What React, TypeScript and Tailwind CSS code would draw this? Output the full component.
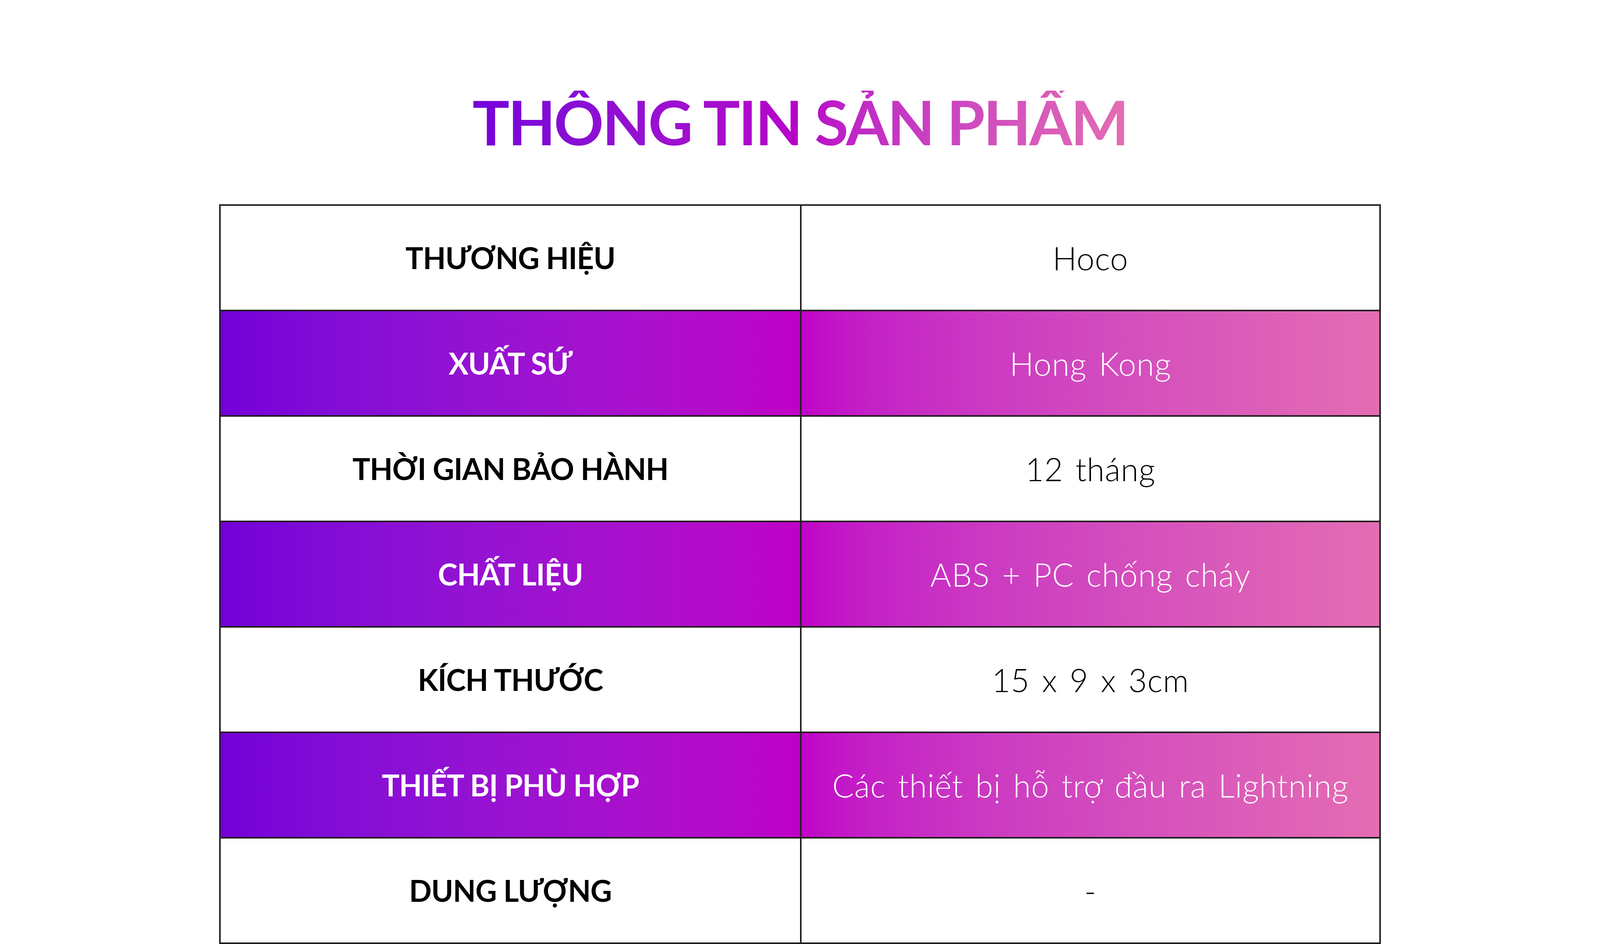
import React from "react";

const rows: { label: string; value: string; grad: boolean }[] = [
  { label: "THƯƠNG HIỆU", value: "Hoco", grad: false },
  { label: "XUẤT SỨ", value: "Hong Kong", grad: true },
  { label: "THỜI GIAN BẢO HÀNH", value: "12 tháng", grad: false },
  { label: "CHẤT LIỆU", value: "ABS + PC chống cháy", grad: true },
  { label: "KÍCH THƯỚC", value: "15 x 9 x 3cm", grad: false },
  { label: "THIẾT BỊ PHÙ HỢP", value: "Các thiết bị hỗ trợ đầu ra Lightning", grad: true },
  { label: "DUNG LƯỢNG", value: "-", grad: false },
];

export default function App() {
  return (
    <div
      className="w-full h-[2417px] bg-white flex flex-col items-center overflow-hidden pt-[232px]"
      style={{ fontFamily: "Lato, 'Noto Sans', sans-serif" }}
    >
      <h1 className="h-[158px] text-[158px] leading-none font-bold tracking-[-4px] bg-linear-to-r from-[#7400d9] via-[#b800c8] to-[#e46cb3] bg-clip-text text-transparent whitespace-nowrap">
        THÔNG TIN SẢN PHẨM
      </h1>
      <div className="mt-[133px] w-[2974px] border-4 border-[#231f20] flex flex-col">
        {rows.map((r, i) => (
          <div
            key={i}
            className={
              "grid grid-cols-2 " +
              (i > 0 ? "h-[270px] border-t-4 border-[#231f20] " : "h-[266px] ") +
              (r.grad
                ? "bg-linear-to-r from-[#7400d9] via-[#c000c8] to-[#e46cb3] text-white"
                : "bg-white text-black")
            }
          >
            <div className="flex items-center justify-center text-[76px] font-bold tracking-[-1px] leading-none">
              {r.label}
            </div>
            <div className="flex items-center justify-center border-l-4 border-[#231f20] text-[82px] font-light tracking-[1px] [word-spacing:8px] leading-none">
              {r.value}
            </div>
          </div>
        ))}
      </div>
    </div>
  );
}
